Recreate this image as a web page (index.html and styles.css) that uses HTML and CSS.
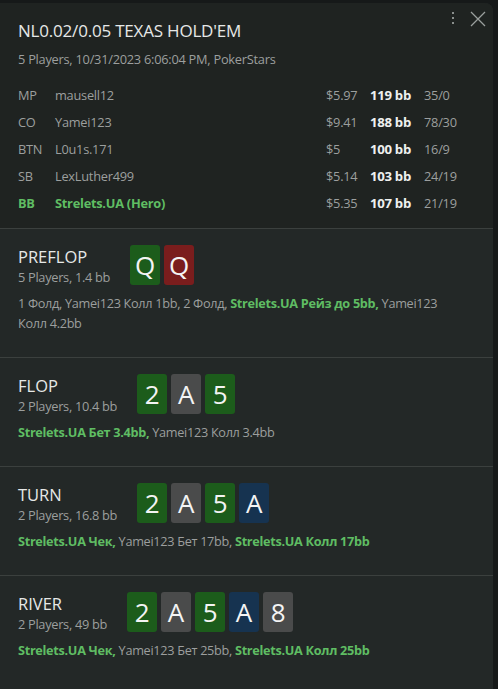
FILE: index.html
```html
<!DOCTYPE html>
<html>
<head>
<meta charset="utf-8">
<link rel="stylesheet" href="styles.css">
</head>
<body>
<div class="panel">
  <div class="tools">
    <svg class="kebab" width="6" height="16" viewBox="0 0 6 16"><rect x="2" y="1" width="2" height="2" fill="#8a8f8d"/><rect x="2" y="6" width="2" height="2" fill="#8a8f8d"/><rect x="2" y="11" width="2" height="2" fill="#8a8f8d"/></svg>
    <svg class="close" width="16" height="16" viewBox="0 0 16 16"><path d="M1 1 L15 15 M15 1 L1 15" stroke="#9a9f9d" stroke-width="1.3" fill="none"/></svg>
  </div>
  <header class="head">
    <h1 class="title">NL0.02/0.05 TEXAS HOLD'EM</h1>
    <div class="sub">5 Players, 10/31/2023 6:06:04 PM, PokerStars</div>
    <div class="players">
      <div class="row"><span>MP</span><span>mausell12</span><span>$5.97</span><b>119 bb</b><span>35/0</span></div>
      <div class="row"><span>CO</span><span>Yamei123</span><span>$9.41</span><b>188 bb</b><span>78/30</span></div>
      <div class="row"><span>BTN</span><span>L0u1s.171</span><span>$5</span><b>100 bb</b><span>16/9</span></div>
      <div class="row"><span>SB</span><span>LexLuther499</span><span>$5.14</span><b>103 bb</b><span>24/19</span></div>
      <div class="row hero"><span>BB</span><span>Strelets.UA (Hero)</span><span class="money">$5.35</span><b>107 bb</b><span class="stat">21/19</span></div>
    </div>
  </header>

  <section class="street">
    <div class="top">
      <div class="label"><div class="name">PREFLOP</div><div class="info">5 Players, 1.4 bb</div></div>
      <div class="cards"><span class="card g">Q</span><span class="card r">Q</span></div>
    </div>
    <p class="act">1 Фолд, Yamei123 Колл 1bb, 2 Фолд, <em>Strelets.UA Рейз до 5bb,</em> Yamei123 Колл 4.2bb</p>
  </section>

  <section class="street">
    <div class="top">
      <div class="label"><div class="name">FLOP</div><div class="info">2 Players, 10.4 bb</div></div>
      <div class="cards"><span class="card g">2</span><span class="card n">A</span><span class="card g">5</span></div>
    </div>
    <p class="act"><em>Strelets.UA Бет 3.4bb,</em> Yamei123 Колл 3.4bb</p>
  </section>

  <section class="street">
    <div class="top">
      <div class="label"><div class="name">TURN</div><div class="info">2 Players, 16.8 bb</div></div>
      <div class="cards"><span class="card g">2</span><span class="card n">A</span><span class="card g">5</span><span class="card b">A</span></div>
    </div>
    <p class="act"><em>Strelets.UA Чек,</em> Yamei123 Бет 17bb, <em>Strelets.UA Колл 17bb</em></p>
  </section>

  <section class="street">
    <div class="top">
      <div class="label"><div class="name">RIVER</div><div class="info">2 Players, 49 bb</div></div>
      <div class="cards"><span class="card g">2</span><span class="card n">A</span><span class="card g">5</span><span class="card b">A</span><span class="card n">8</span></div>
    </div>
    <p class="act"><em>Strelets.UA Чек,</em> Yamei123 Бет 25bb, <em>Strelets.UA Колл 25bb</em></p>
  </section>
</div>
</body>
</html>
```

FILE: styles.css
```css
* { box-sizing: border-box; }
html, body { margin: 0; padding: 0; }
body {
  background: #161919;
  font-family: "Open Sans", "Noto Sans", sans-serif;
  color: #9c9f9e;
  height: 689px;
  overflow: hidden;
}
.panel {
  position: relative;
  margin-top: 3px;
  width: 493px;
  height: 686px;
  background: #232827;
  border-radius: 0 8px 0 0;
  overflow: hidden;
}
.tools {
  position: absolute;
  top: 8px;
  right: 7px;
  display: flex;
  align-items: center;
  gap: 14px;
}
.head {
  background: #1f2321;
  padding: 16px 18px 11px;
}
.title {
  margin: 0;
  font-size: 17px;
  font-weight: 400;
  line-height: 24px;
  color: #e6e8e7;
  letter-spacing: -0.2px;
}
.sub {
  margin-top: 7px;
  font-size: 12.8px;
  line-height: 18px;
  letter-spacing: -0.25px;
}
.players { margin-top: 14px; }
.row {
  display: grid;
  grid-template-columns: 37px 271px 44px 54px auto;
  font-size: 12.8px;
  line-height: 27px;
  letter-spacing: -0.25px;
}
.row b { color: #eef0ef; font-weight: 700; font-size: 13.2px; letter-spacing: -0.3px; }
.hero { color: #5fbd63; font-weight: 700; }
.hero .money, .hero .stat { color: #9c9f9e; font-weight: 400; }
.street {
  border-top: 1px solid #3b403e;
  padding: 16px 18px 24px;
}
.top { display: flex; align-items: flex-start; gap: 20px; }
.label { margin-top: 1px; }
.name {
  font-size: 16.5px;
  line-height: 22px;
  color: #e6e8e7;
}
.info {
  font-size: 12.8px;
  line-height: 18px;
  letter-spacing: -0.3px;
}
.cards { display: flex; gap: 4px; }
.card {
  width: 30px;
  height: 40px;
  border-radius: 3px;
  color: #f4f4f4;
  font-size: 26px;
  line-height: 40px;
  text-align: center;
}
.g { background: #1c5c1b; }
.r { background: #7a1d1d; }
.n { background: #4a4b4b; }
.b { background: #163350; }
.act {
  margin: 7px 0 0;
  max-width: 440px;
  font-size: 12.7px;
  line-height: 20px;
  letter-spacing: -0.3px;
}
.act em { font-style: normal; font-weight: 700; color: #5fbd63; letter-spacing: -0.3px; }
```
